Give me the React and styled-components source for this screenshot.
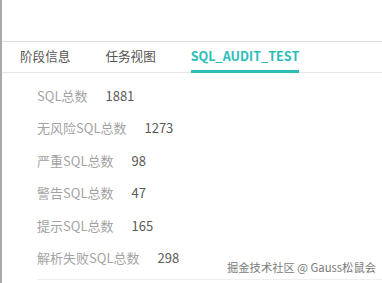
import React from "react";
import styled, { createGlobalStyle } from "styled-components";

const Global = createGlobalStyle`
  html, body { margin: 0; padding: 0; background: #fff; }
  body { font-family: "Noto Sans CJK SC", "Noto Sans", sans-serif; }
`;

const Frame = styled.div`
  position: relative;
  height: 283px;
  border-left: 2px solid #a9a9a9;
  box-sizing: border-box;
  overflow: hidden;
`;

const TopSpace = styled.div`
  height: 41px;
`;

const TabBar = styled.div`
  display: flex;
  align-items: stretch;
  gap: 35px;
  height: 30px;
  padding-left: 18px;
  border-top: 1px solid #dedede;
  border-bottom: 1px solid #e6e6e6;
`;

const Tab = styled.div`
  display: flex;
  align-items: center;
  box-sizing: border-box;
  padding-bottom: 2px;
  font-size: 12.6px;
  font-weight: ${(p) => (p.$active ? 700 : 400)};
  color: ${(p) => (p.$active ? "#2bbdb8" : "#555")};
  border-bottom: 3px solid ${(p) => (p.$active ? "#2bbdb8" : "transparent")};
  margin-bottom: -1px;
`;

const Stats = styled.div`
  display: flex;
  flex-direction: column;
  padding: 6px 0 0 35px;
`;

const Row = styled.div`
  display: flex;
  align-items: center;
  height: 32.5px;
  font-size: 13px;
`;

const Label = styled.span`
  color: #a3a3a3;
  margin-right: 18px;
`;

const Value = styled.span`
  color: #5a5a5a;
`;

const Divider = styled.div`
  margin: 5px 0 0 35px;
  border-top: 1px solid #efefef;
`;

const Watermark = styled.div`
  position: absolute;
  left: 225px;
  top: 259px;
  font-size: 11.3px;
  color: #7a7a7a;
  white-space: nowrap;
`;

const stats = [
  ["SQL总数", 1881],
  ["无风险SQL总数", 1273],
  ["严重SQL总数", 98],
  ["警告SQL总数", 47],
  ["提示SQL总数", 165],
  ["解析失败SQL总数", 298],
];

export default function App() {
  return (
    <>
      <Global />
      <Frame>
        <TopSpace />
        <TabBar>
          <Tab>阶段信息</Tab>
          <Tab>任务视图</Tab>
          <Tab $active>SQL_AUDIT_TEST</Tab>
        </TabBar>
        <Stats>
          {stats.map(([l, v]) => (
            <Row key={l}>
              <Label>{l}</Label>
              <Value>{v}</Value>
            </Row>
          ))}
        </Stats>
        <Divider />
        <Watermark>掘金技术社区 @ Gauss松鼠会</Watermark>
      </Frame>
    </>
  );
}
